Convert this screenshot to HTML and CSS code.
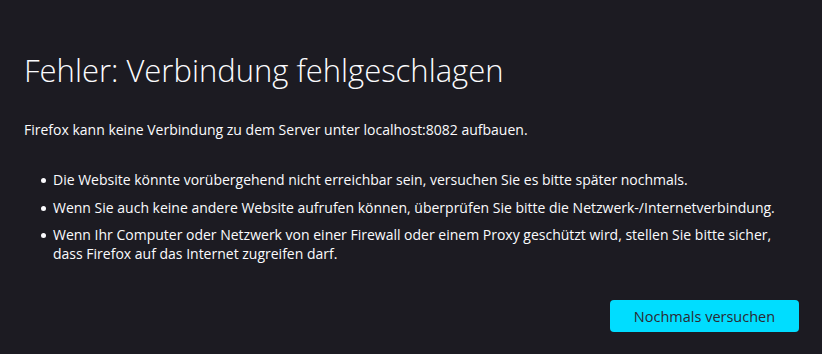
FILE: index.html
```html
<!DOCTYPE html>
<html lang="de">
<head>
    <meta charset="UTF-8">
    <meta name="viewport" content="width=device-width, initial-scale=1.0">
    <title>Problem beim Laden der Seite</title>
    <link rel="stylesheet" href="styles.css">
</head>
<body>
    <div class="container">
        <h1 class="title">Fehler: Verbindung fehlgeschlagen</h1>

        <p class="short-desc">Firefox kann keine Verbindung zu dem Server unter localhost:8082 aufbauen.</p>

        <ul class="long-desc">
            <li>Die Website könnte vorübergehend nicht erreichbar sein, versuchen Sie es bitte später nochmals.</li>
            <li>Wenn Sie auch keine andere Website aufrufen können, überprüfen Sie bitte die Netzwerk-/Internetverbindung.</li>
            <li>Wenn Ihr Computer oder Netzwerk von einer Firewall oder einem Proxy geschützt wird, stellen Sie bitte sicher, dass Firefox auf das Internet zugreifen darf.</li>
        </ul>

        <div class="buttons">
            <button class="primary">Nochmals versuchen</button>
        </div>
    </div>
</body>
</html>
```

FILE: styles.css
```css
body {
    margin: 0;
    background: #1c1b22;
    color: #fbfbfe;
    font-family: "Open Sans", "Noto Sans", sans-serif;
    font-size: 14px;
    line-height: 19px;
}
.container {
    padding: 50px 23px 0 24px;
}
.title {
    margin: 0 0 30px;
    font-size: 31px;
    font-weight: 300;
    line-height: 40px;
}
.short-desc {
    margin: 0 0 31px;
}
.long-desc {
    list-style: none;
    margin: 0 0 37px;
    padding: 0;
    display: flex;
    flex-direction: column;
    gap: 8.5px;
}
.long-desc li {
    display: flex;
}
.long-desc li::before {
    content: "";
    flex: none;
    width: 5px;
    height: 5px;
    margin: 8px 7px 0 17px;
    border-radius: 50%;
    background: #fbfbfe;
}
.buttons {
    display: flex;
    justify-content: flex-end;
}
button.primary {
    width: 189px;
    height: 32px;
    border: none;
    border-radius: 4px;
    background: #00ddff;
    color: #2b2a33;
    font-family: inherit;
    font-size: 14.5px;
    font-weight: 500;
    cursor: pointer;
}
button.primary:hover {
    background: #80ebff;
}
```
